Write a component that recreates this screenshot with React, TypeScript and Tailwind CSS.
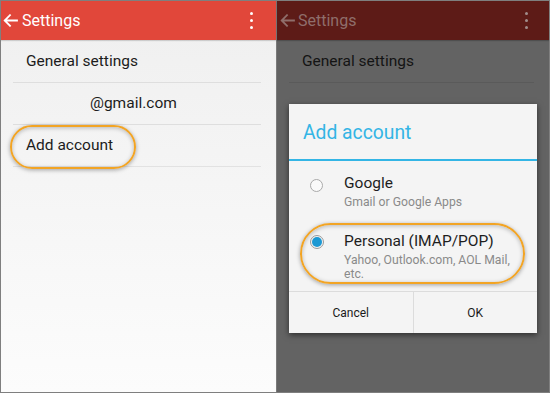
import React from "react";

const Arrow = ({ color }: { color: string }) => (
  <svg width="15" height="13" viewBox="0 0 15 13" fill="none">
    <path d="M14 6.5H2M7 1.2L1.7 6.5L7 11.8" stroke={color} strokeWidth="1.8" strokeLinecap="square" />
  </svg>
);

const Kebab = ({ color }: { color: string }) => (
  <div className="flex flex-col gap-[3.5px] items-center">
    <div className="w-[3.2px] h-[3.2px] rounded-full" style={{ background: color }} />
    <div className="w-[3.2px] h-[3.2px] rounded-full" style={{ background: color }} />
    <div className="w-[3.2px] h-[3.2px] rounded-full" style={{ background: color }} />
  </div>
);

const oval =
  "absolute rounded-full border-2 border-[#f2a424] shadow-[0_1px_4px_rgba(0,0,0,0.35),inset_0_1px_4px_rgba(0,0,0,0.25)] pointer-events-none";

export default function App() {
  return (
    <div
      className="w-[550px] h-[393px] border border-[#7f7f7f] bg-[#7a7a7a] flex gap-[1px] overflow-hidden"
      style={{ fontFamily: "Roboto, 'Noto Sans', sans-serif" }}
    >
      {/* Left panel */}
      <div className="relative w-[275px] h-full flex flex-col bg-gradient-to-b from-[#efefef] to-[#fcfcfc]">
        <div className="h-[39px] bg-[#e1473a] flex items-center pl-[2px] pr-[23px] shadow-[0_1px_1px_rgba(0,0,0,0.15)]">
          <Arrow color="#ffffff" />
          <span className="ml-[4px] text-white text-[16px] leading-none">Settings</span>
          <div className="flex-1" />
          <Kebab color="#ffffff" />
        </div>
        <div className="mx-[12px] mr-[15px] flex flex-col text-[#1c1c1c] text-[15.5px]">
          <div className="h-[42px] flex items-center pl-[13px] pt-[2px]">General settings</div>
          <div className="h-px bg-[#dedede]" />
          <div className="h-[41px] flex items-center pl-[77px] pt-[1px]">@gmail.com</div>
          <div className="h-px bg-[#dedede]" />
          <div className="h-[41px] flex items-center pl-[13px] pt-[1px]">Add account</div>
          <div className="h-px bg-[#e2e2e2]" />
        </div>
        <div className={oval + " left-[9px] top-[124px] w-[126px] h-[44px]"} />
      </div>

      {/* Right panel */}
      <div className="relative flex-1 h-full flex flex-col bg-[#636363]">
        <div className="h-[39px] bg-[#5d1b17] flex items-center pl-[3px] pr-[21px] shadow-[0_1px_1px_rgba(0,0,0,0.2)]">
          <Arrow color="#8f6e6b" />
          <span className="ml-[3px] text-[#8f6e6b] text-[16px] leading-none">Settings</span>
          <div className="flex-1" />
          <Kebab color="#a18d8b" />
        </div>
        <div className="mx-[12px] mr-[15px] flex flex-col text-[#141414] text-[15.5px]">
          <div className="h-[42px] flex items-center pl-[13px] pt-[2px]">General settings</div>
          <div className="h-px bg-[#5a5a5a]" />
        </div>

        {/* Dialog */}
        <div className="absolute left-[12px] top-[103px] w-[248px] h-[229px] bg-[#f4f4f4] shadow-[0_2px_6px_rgba(0,0,0,0.55)] flex flex-col">
          <div className="h-[55px] flex items-center pl-[14px] pt-[2px] text-[#33b5e5] text-[19.3px] leading-none">
            Add account
          </div>
          <div className="h-[2px] bg-[#33b5e5]" />
          <div className="relative h-[130px] flex flex-col pt-[12px]">
            <div className="flex pl-[21px]">
              <div className="w-[34px] pt-[5.5px]">
                <div className="w-[13px] h-[13px] rounded-full border-[1.5px] border-[#a9a9a9] bg-[#fafafa]" />
              </div>
              <div className="flex flex-col">
                <div className="text-[15.5px] leading-[20px] text-[#1e1e1e]">Google</div>
                <div className="mt-[2px] text-[12.2px] leading-[14px] text-[#8a8a8a]">Gmail or Google Apps</div>
              </div>
            </div>
            <div className="flex pl-[21px] mt-[22px]">
              <div className="w-[34px] pt-[4px]">
                <div className="w-[14px] h-[14px] rounded-full border border-[#9a9a9a] bg-[#f2f2f2] flex items-center justify-center">
                  <div className="w-[10px] h-[10px] rounded-full bg-[#1b98d3]" />
                </div>
              </div>
              <div className="flex flex-col">
                <div className="text-[15.5px] leading-[20px] text-[#1e1e1e]">Personal (IMAP/POP)</div>
                <div className="mt-[2px] text-[12.2px] leading-[14px] text-[#8a8a8a]">
                  Yahoo, Outlook.com, AOL Mail,
                  <br />
                  etc.
                </div>
              </div>
            </div>
          </div>
          <div className="h-px bg-[#dcdcdc]" />
          <div className="flex-1 flex">
            <div className="flex-1 flex items-center justify-center text-[12px] text-[#1a1a1a]">Cancel</div>
            <div className="w-px bg-[#dcdcdc]" />
            <div className="flex-1 flex items-center justify-center text-[12px] text-[#1a1a1a]">OK</div>
          </div>
          <div className={oval + " left-[11px] top-[119px] w-[225px] h-[61px]"} />
        </div>
      </div>
    </div>
  );
}
